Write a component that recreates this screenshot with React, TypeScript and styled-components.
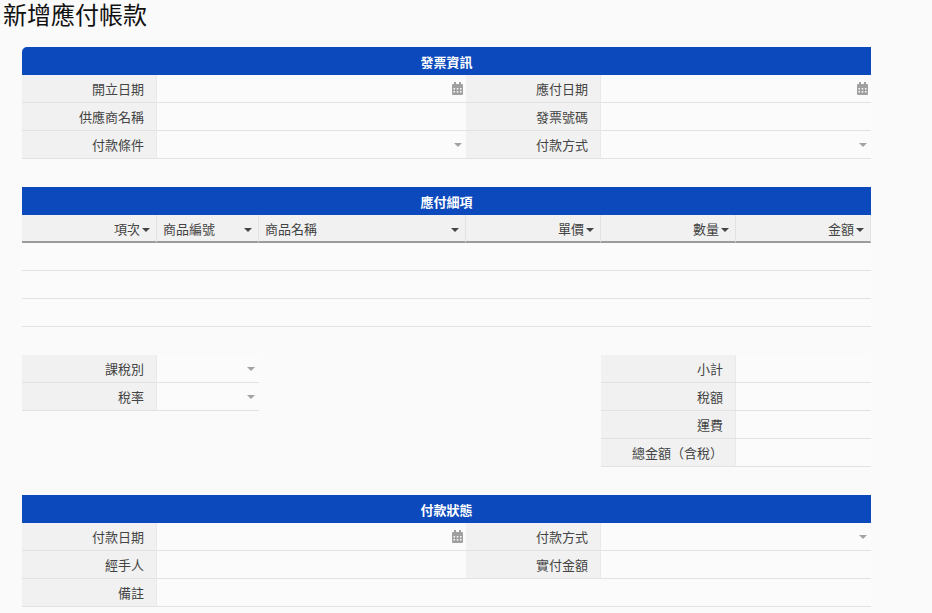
import React from 'react'
import styled, { createGlobalStyle } from 'styled-components'

const GlobalStyle = createGlobalStyle`
  html, body {
    margin: 0;
    background: #fafafa;
    font-family: "Liberation Sans", "Noto Sans CJK TC", sans-serif;
    color: #444;
  }
`

const CalendarIcon = () => (
  <CalendarSvg viewBox="0 0 11 13" width="11" height="13" aria-hidden="true">
    <path
      fill="#a0a0a0"
      fillRule="evenodd"
      d="M2 0h2v2h3V0h2v2h1a1 1 0 0 1 1 1v9a1 1 0 0 1-1 1H1a1 1 0 0 1-1-1V3a1 1 0 0 1 1-1h1zM1.5 6v1.5h1.5V6zm3.25 0v1.5h1.5V6zM8 6v1.5h1.5V6zM1.5 9v1.5h1.5V9zm3.25 0v1.5h1.5V9zM8 9v1.5h1.5V9z"
    />
  </CalendarSvg>
)

type FieldKind = 'date' | 'select' | 'text'

interface FormRowProps {
  label: string
  kind?: FieldKind
  span?: number
}

const LabeledField = ({ label, kind = 'text', span = 2 }: FormRowProps) => (
  <>
    <Label>{label}</Label>
    <Field $span={span}>
      {kind === 'date' && <CalendarIcon />}
      {kind === 'select' && <SelectCaret />}
    </Field>
  </>
)

const columns = [
  { title: '項次', left: false },
  { title: '商品編號', left: true },
  { title: '商品名稱', left: true },
  { title: '單價', left: false },
  { title: '數量', left: false },
  { title: '金額', left: false },
]

const App = () => (
  <>
    <GlobalStyle />
    <Title>新增應付帳款</Title>
    <Sheet>
      <SectionHeader $rounded>發票資訊</SectionHeader>
      <LabeledField label="開立日期" kind="date" />
      <LabeledField label="應付日期" kind="date" />
      <LabeledField label="供應商名稱" />
      <LabeledField label="發票號碼" />
      <LabeledField label="付款條件" kind="select" />
      <LabeledField label="付款方式" kind="select" />
      <Spacer />

      <SectionHeader>應付細項</SectionHeader>
      {columns.map((col) => (
        <HeadCell key={col.title} $left={col.left}>
          <span>{col.title}</span>
          <HeadCaret />
        </HeadCell>
      ))}
      <ItemRow />
      <ItemRow />
      <ItemRow />
      <Spacer />

      <LabeledField label="課稅別" kind="select" span={1} />
      <Gap $span={2} />
      <LabeledField label="小計" span={1} />
      <LabeledField label="稅率" kind="select" span={1} />
      <Gap $span={2} />
      <LabeledField label="稅額" span={1} />
      <Gap $span={4} />
      <LabeledField label="運費" span={1} />
      <Gap $span={4} />
      <LabeledField label="總金額（含稅）" span={1} />
      <Spacer />

      <SectionHeader>付款狀態</SectionHeader>
      <LabeledField label="付款日期" kind="date" />
      <LabeledField label="付款方式" kind="select" />
      <LabeledField label="經手人" />
      <LabeledField label="實付金額" />
      <LabeledField label="備註" span={5} />
    </Sheet>
  </>
)

export default App

const Title = styled.h1`
  margin: 0;
  padding-left: 3px;
  height: 47px;
  font-size: 24px;
  font-weight: 400;
  line-height: 32px;
  color: #111;
`

const Sheet = styled.div`
  margin-left: 22px;
  width: 849px;
  display: grid;
  grid-template-columns: 135px 102px 207px 135px 135px 135px;
  grid-auto-rows: 28px;
  font-size: 13px;
`

const SectionHeader = styled.div<{ $rounded?: boolean }>`
  grid-column: span 6;
  display: flex;
  align-items: center;
  justify-content: center;
  background: #0b49bc;
  color: #fff;
  font-weight: 700;
  font-size: 13px;
  border-top-left-radius: ${(p) => (p.$rounded ? '5px' : '0')};
`

const Spacer = styled.div`
  grid-column: span 6;
`

const Gap = styled.div<{ $span: number }>`
  grid-column: span ${(p) => p.$span};
`

const Label = styled.div`
  display: flex;
  align-items: center;
  justify-content: flex-end;
  padding-right: 12px;
  background: #f1f1f1;
  border-bottom: 1px solid #e2e2e2;
  border-right: 1px solid #e9e9e9;
  white-space: nowrap;
`

const Field = styled.div<{ $span: number }>`
  grid-column: span ${(p) => p.$span};
  display: flex;
  align-items: center;
  justify-content: flex-end;
  padding-right: 3px;
  background: #fbfbfb;
  border-bottom: 1px solid #e2e2e2;
`

const HeadCell = styled.div<{ $left: boolean }>`
  display: flex;
  align-items: center;
  justify-content: ${(p) => (p.$left ? 'space-between' : 'flex-end')};
  gap: 2px;
  padding: 0 6px 0 ${(p) => (p.$left ? '6px' : '0')};
  background: #f1f1f1;
  border-bottom: 2px solid #9b9b9b;
  border-right: 1px solid #e2e2e2;
`

const ItemRow = styled.div`
  grid-column: span 6;
  background: #fbfbfb;
  border-bottom: 1px solid #e2e2e2;
`

const HeadCaret = styled.i`
  width: 0;
  height: 0;
  margin-top: 4px;
  border-left: 4px solid transparent;
  border-right: 4px solid transparent;
  border-top: 4px solid #444;
`

const SelectCaret = styled.i`
  width: 0;
  height: 0;
  margin: 1px 1px 0 0;
  border-left: 4px solid transparent;
  border-right: 4px solid transparent;
  border-top: 4px solid #a3a3a3;
`

const CalendarSvg = styled.svg`
  display: block;
`
